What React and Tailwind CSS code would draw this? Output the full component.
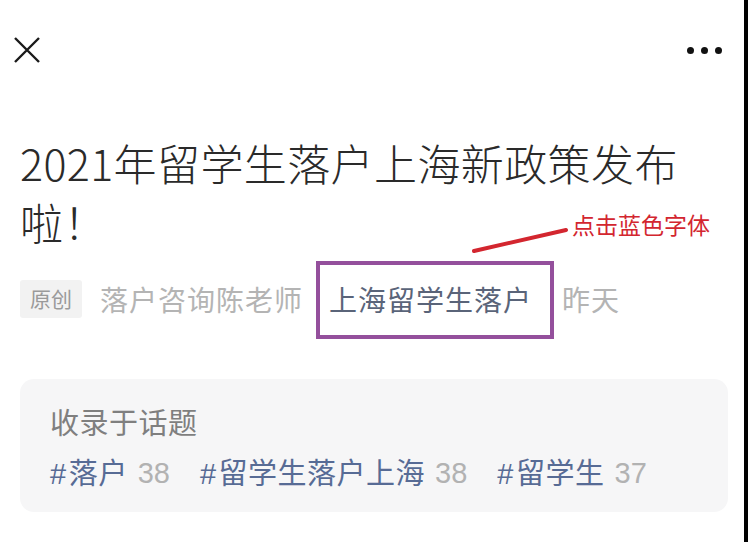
import React from 'react';

const font = { fontFamily: '"Noto Sans CJK SC", "Noto Sans", sans-serif' };
const latin = { fontFamily: '"Liberation Sans", "Noto Sans CJK SC", sans-serif' };

const CloseIcon = () => (
  <svg width="28" height="26" viewBox="0 0 28 26" fill="none">
    <path d="M2 1L26 25M26 1L2 25" stroke="#1a1a1a" strokeWidth="2.4" />
  </svg>
);

const MoreIcon = () => (
  <div className="flex items-center gap-[7px]">
    <span className="w-[7px] h-[7px] rounded-full bg-[#111]" />
    <span className="w-[7px] h-[7px] rounded-full bg-[#111]" />
    <span className="w-[7px] h-[7px] rounded-full bg-[#111]" />
  </div>
);

const topics = [
  { name: '落户', count: 38 },
  { name: '留学生落户上海', count: 38 },
  { name: '留学生', count: 37 },
];

export default function App() {
  return (
    <div className="w-[748px] h-[542px] bg-white flex overflow-hidden" style={font}>
      <div className="flex-1 relative">
        {/* 顶部栏 */}
        <div className="h-[100px] flex items-center justify-between pl-[13px] pr-[22px]">
          <CloseIcon />
          <MoreIcon />
        </div>

        {/* 标题 */}
        <h1 className="px-[20px] mt-[33px] text-[43px] leading-[59px] tracking-[0.4px] text-[#2a2a2a] font-light">
          2021年留学生落户上海新政策发布<br />啦！
        </h1>

        {/* 标注 */}
        <svg className="absolute left-[471px] top-[226px]" width="100" height="30" viewBox="0 0 100 30">
          <path d="M3 25L95 4" stroke="#d3262f" strokeWidth="4" strokeLinecap="round" />
        </svg>
        <span className="absolute left-[572px] top-[210px] text-[23px] leading-[28px] text-[#d3262f]">点击蓝色字体</span>

        {/* 作者信息 */}
        <div className="px-[20px] mt-[29px] flex items-center h-[38px] text-[28px] tracking-[1px]">
          <span className="h-[38px] w-[62px] flex items-center justify-center rounded-[3px] bg-[#f2f2f2] text-[#9a9a9a] text-[21px] tracking-normal">
            原创
          </span>
          <span className="ml-[18px] text-[#b4b4b4]">落户咨询陈老师</span>
          <span className="relative ml-[26px] text-[#5a6479]">
            上海留学生落户
            <span className="absolute -left-[13px] -right-[22px] -top-[17px] -bottom-[19px] border-[4px] border-[#94509c]" />
          </span>
          <span className="ml-[30px] text-[#b4b4b4]">昨天</span>
        </div>

        {/* 话题 */}
        <div className="ml-[20px] mr-[16px] mt-[61px] h-[133px] rounded-[14px] bg-[#f6f6f7] px-[30px] pt-[24px]">
          <div className="text-[29px] leading-[36px] tracking-[0.5px] text-[#7f7f7f]">收录于话题</div>
          <div className="mt-[14px] flex items-center gap-[30px] text-[29px] leading-[36px]">
            {topics.map((t) => (
              <span key={t.name} className="flex items-center gap-[10px]">
                <span className="text-[#576b95] tracking-[0.5px]">
                  <span className="mr-[2px]" style={latin}>#</span>
                  {t.name}
                </span>
                <span className="text-[#b2b2b2]" style={latin}>{t.count}</span>
              </span>
            ))}
          </div>
        </div>
      </div>
      <div className="w-[4px] bg-black" />
    </div>
  );
}
